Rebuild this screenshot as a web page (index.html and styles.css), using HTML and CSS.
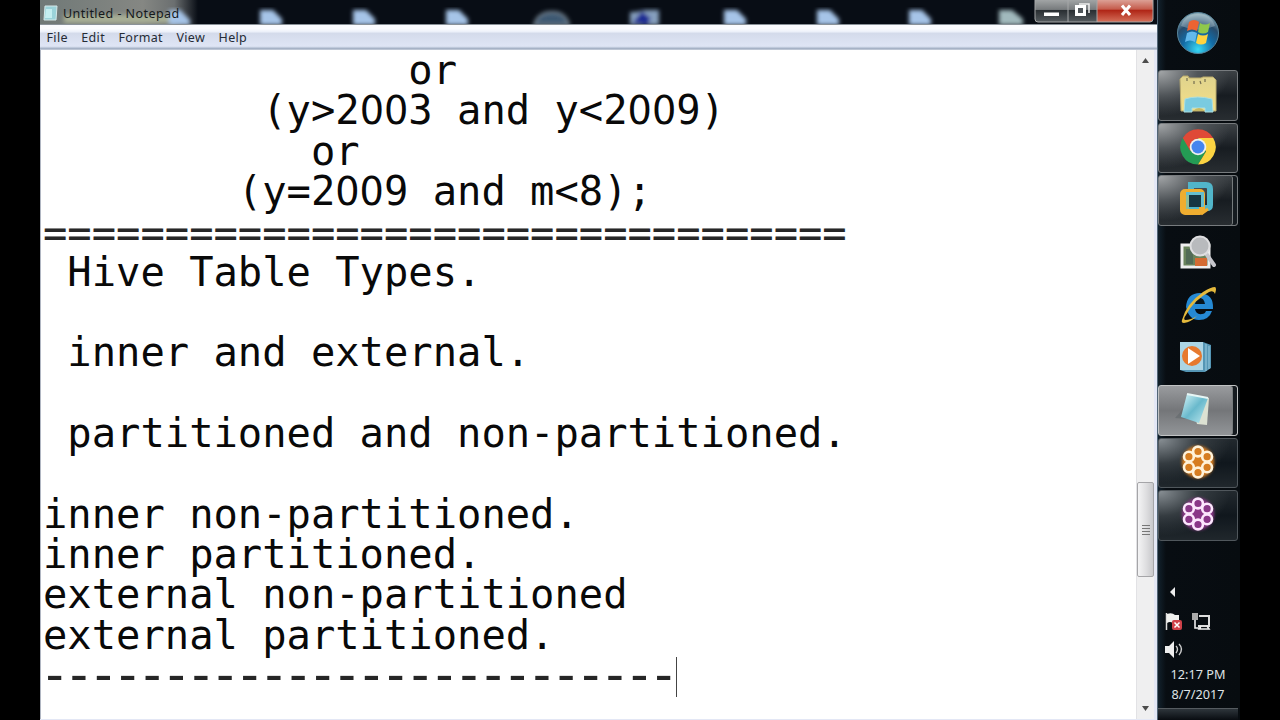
FILE: index.html
```html
<!DOCTYPE html>
<html lang="en">
<head>
<meta charset="utf-8">
<title>Untitled - Notepad</title>
<link rel="stylesheet" href="styles.css">
</head>
<body>
<main class="screen">
  <section class="notepad">
    <header class="titlebar">
      <svg class="desktop-strip" viewBox="0 0 1117 25" width="1117" height="25" aria-hidden="true">
        <defs>
          <filter id="soft" x="-20%" y="-20%" width="140%" height="140%"><feGaussianBlur stdDeviation="2"/></filter>
          <linearGradient id="glass" x1="0" x2="1"><stop offset="0" stop-color="#707977"/><stop offset=".65" stop-color="#858783"/><stop offset=".85" stop-color="#6b6f70"/><stop offset="1" stop-color="#080d15"/></linearGradient>
        </defs>
        <rect width="1117" height="25" fill="#080d15"/>
        <rect width="158" height="25" fill="url(#glass)"/>
        <g filter="url(#soft)">
          <rect x="24" y="15" width="105" height="8" fill="#a9b096"/>
          <g fill="#a6c4e8">
            <path d="M129 25V10h11l10 10v5z"/><path d="M220 25V10h13l9 9v6z"/><path d="M313 25V10h13l9 9v6z"/><path d="M406 25V10h13l9 9v6z"/>
            <path d="M590 25V12h5l10-2h14v15z" opacity=".8"/><path d="M684 25V10h13l9 9v6z"/><path d="M777 25V10h13l9 9v6z"/><path d="M869 25V10h13l9 9v6z"/><path d="M959 25V10h13l11 9v6z" fill="#a1b9bd"/>
          </g>
          <path d="M494 25q4-13 18-13t17 13z" fill="#3c5872" stroke="#7c8b97" stroke-width="2"/>
          <path d="M592 23l10-12 9 7-3 7z" fill="#1b2993"/>
        </g>
        <path d="M0 24.5h1117" stroke="#8a9299"/>
      </svg>
      <div class="caption">
        <svg class="app-icon" width="18" height="18" viewBox="0 0 18 18"><path d="M3 2h12l-1 14H2z" fill="#9bd3d9" stroke="#d5e8e8"/><path d="M4 5h6v9H3z" fill="#c4eef0"/></svg>
        <span>Untitled - Notepad</span>
      </div>
      <div class="window-buttons">
        <svg width="120" height="24" viewBox="0 0 120 24">
          <defs>
            <linearGradient id="gray" x2="0" y2="1"><stop stop-color="#a1a4a5"/><stop offset=".43" stop-color="#777b7d"/><stop offset=".47" stop-color="#292e32"/><stop offset="1" stop-color="#555b5f"/></linearGradient>
            <linearGradient id="red" x2="0" y2="1"><stop stop-color="#dca095"/><stop offset=".42" stop-color="#c55b4b"/><stop offset=".46" stop-color="#af2415"/><stop offset="1" stop-color="#d5705a"/></linearGradient>
          </defs>
          <path d="M1 0h62v22H4q-3 0-3-3z" fill="url(#gray)"/><path d="M63 0h56v19q0 3-3 3H63z" fill="url(#red)"/>
          <path d="M1 0v19q0 3 3 3h112q3 0 3-3V0M34 0v22M63 0v22" fill="none" stroke="#a5a7a8"/>
          <path d="M10 12.5h15v3.5H10z" fill="#fff"/>
          <path d="M45 4h10v9" fill="none" stroke="#eee" stroke-width="1.5"/><path d="M42.5 6.5h8v8h-8z" fill="#50565a" stroke="#fff" stroke-width="3"/>
          <path d="M88 5.5l8 9.5M96 5.5l-8 9.5" stroke="#fff" stroke-width="3"/>
        </svg>
      </div>
    </header>
    <nav class="menu"><span>File</span><span>Edit</span><span>Format</span><span>View</span><span>Help</span></nav>
    <div class="editor">
      <pre class="text">               or
         (y&gt;2<span class="zero">00</span>3 and y&lt;2<span class="zero">00</span>9)
           or
        (y=2<span class="zero">00</span>9 and m&lt;8);
<span class="rule">=================================</span>
 Hive Table Types.

 inner and external.

 partitioned and non-partitioned.

inner non-partitioned.
inner partitioned.
external non-partitioned
external partitioned.
<span class="dash">--------------------------</span><span class="caret"></span></pre>
      <div class="scrollbar">
        <span class="arrow up"></span>
        <div class="track"><div class="thumb"><i></i><i></i><i></i><i></i></div></div>
        <span class="arrow down"></span>
      </div>
    </div>
  </section>
  <aside class="taskbar">
    <div class="start">
      <svg width="44" height="44" viewBox="0 0 44 44">
        <defs><radialGradient id="orb" cx=".5" cy=".9" r=".85"><stop stop-color="#37d9f5"/><stop offset=".45" stop-color="#136ba5"/><stop offset=".75" stop-color="#274c6c"/><stop offset="1" stop-color="#8eacb7"/></radialGradient></defs>
        <circle cx="22" cy="22" r="20.5" fill="url(#orb)" stroke="#57849a"/>
        <path d="M5 15Q9 3 22 3t17 12q-17 7-34 0z" fill="#c4d8df" opacity=".35"/>
        <path d="M13 11q5-4 10 0l-2 9q-5-3-10 0z" fill="#ed6332"/><path d="M24 12q5 3 10 0l-2 9q-5 3-10 0z" fill="#8fc84b"/>
        <path d="M11 22q5-3 10 0l-2 9q-5-3-10 0z" fill="#63b9ec"/><path d="M22 23q5 3 10 0l-2 9q-5 3-10 0z" fill="#ffd33f"/>
      </svg>
    </div>
    <div class="task framed">
      <svg width="42" height="40" viewBox="0 0 42 40"><defs><linearGradient id="folder" x2="0" y2="1"><stop stop-color="#dfd38d"/><stop offset="1" stop-color="#f4df87"/></linearGradient></defs><path d="M3 5l3-3h5l1 2h12l2-1h10l3 3v31H4z" fill="url(#folder)" stroke="#b9aa6c"/><path d="M10 4v3M17 7v3M23 7l1 3M28 5v3" stroke="#756e50" stroke-width="1.2"/><path d="M7 38l1-13q12-4 27 0l1 13h-8v-4H15v4z" fill="#7acbe0" stroke="#acdfe0"/><path d="M16 37q6-6 12 0z" fill="#c6b865"/></svg>
    </div>
    <div class="task framed">
      <svg width="36" height="36" viewBox="0 0 36 36"><path d="M18 18L2.8 9A17.5 17.5 0 0 0 18 35.5l8-13z" fill="#249b54"/><path d="M18 9h15.2A17.5 17.5 0 0 1 18 35.5l8-13z" fill="#fbd342"/><path d="M2.8 9l7.5 13 7.7-13h15.2A17.5 17.5 0 0 0 2.8 9z" fill="#df4937"/><circle cx="18" cy="18" r="8.3" fill="#eef1ed"/><circle cx="18" cy="18" r="6.5" fill="#4585ee"/></svg>
    </div>
    <div class="task framed stacked">
      <svg class="vm" width="38" height="38" viewBox="0 0 38 38"><path d="M14 5h15q4 0 4 4v16q0 3-3 3H14z" fill="none" stroke="#51b5c9" stroke-width="6"/><rect x="6" y="12" width="19" height="20" rx="2" fill="none" stroke="#efad30" stroke-width="6"/><path d="M9 15v-3h18v15h-4V15z" fill="#65bdcf"/><path d="M9 15h3v14H9z" fill="#8ebd9a"/><path d="M12 15h12v12H12z" fill="#173542"/><path d="M24 34l7-5" stroke="#efad30" stroke-width="3"/></svg>
    </div>
    <div class="task">
      <svg width="40" height="38" viewBox="0 0 40 38"><path d="M4 12h27v22H4z" fill="#69835b" stroke="#eee" stroke-width="3"/><path d="M17 25h12v8H17z" fill="#d46b32"/><path d="M8 16h7v15H8z" fill="#526b56"/><path d="M27 19l9 13" stroke="#c6c6cc" stroke-width="4" stroke-linecap="round"/><circle cx="22" cy="13" r="9.5" fill="#b8babd" stroke="#dedee0" stroke-width="2"/></svg>
    </div>
    <div class="task">
      <svg width="40" height="40" viewBox="0 0 40 40"><path d="M34 27Q31 36 21 36T8 23Q9 9 22 9q14 1 13 16H17q1 6 7 5 3 0 4-3z" fill="#2589d4"/><path d="M17 20h10q-1-6-5-6-4 1-5 6z" fill="#07151f"/><path d="M4 36Q8 20 25 8q8-5 12-5 2 1 0 7-1-4-6-2Q16 16 8 31q-3 4-1 5 6 0 12-4-6 6-13 7-3 0-2-3z" fill="#e4b93c"/></svg>
    </div>
    <div class="task">
      <svg width="44" height="36" viewBox="0 0 44 36"><path d="M4 3h23v28H4z" fill="#acd5e5"/><path d="M27 3l8 3v23l-6 4H10l-6-2h23z" fill="#5596b5"/><path d="M30 5v27M33 7v23" stroke="#9ccce0"/><circle cx="16" cy="17" r="10" fill="#e7792e"/><path d="M12 9l12 8-12 8z" fill="#fff"/></svg>
    </div>
    <div class="task framed stacked active">
      <svg class="note-icon" width="42" height="38" viewBox="0 0 42 38"><defs><linearGradient id="note" x2="1" y2="1"><stop stop-color="#dcf8fa"/><stop offset=".5" stop-color="#69b9cc"/><stop offset="1" stop-color="#c1eaf0"/></linearGradient></defs><path d="M0 28Q10 18 15 5l15 2-6 23z" fill="#50595d" opacity=".35"/><path d="M15 5l19 3-2 27-10-1z" fill="#dce1d2"/><path d="M12 4l21 4-9 25-18-6z" fill="url(#note)"/><path d="M12 4l21 4" stroke="#e7f6f5" stroke-width="2"/></svg>
    </div>
    <div class="task framed flower orange">
      <svg width="38" height="38" viewBox="0 0 38 38"><circle class="glow" cx="19" cy="19" r="16"/><g fill="none" stroke="#fff2d9" stroke-width="2.6"><circle cx="19" cy="8.5" r="4.9"/><circle cx="28.1" cy="13.7" r="4.9"/><circle cx="28.1" cy="24.3" r="4.9"/><circle cx="19" cy="29.5" r="4.9"/><circle cx="9.9" cy="24.3" r="4.9"/><circle cx="9.9" cy="13.7" r="4.9"/></g></svg>
    </div>
    <div class="task framed flower purple">
      <svg width="38" height="38" viewBox="0 0 38 38"><circle class="glow" cx="19" cy="19" r="16"/><g fill="none" stroke="#fce6fd" stroke-width="2.6"><circle cx="19" cy="8.5" r="4.9"/><circle cx="28.1" cy="13.7" r="4.9"/><circle cx="28.1" cy="24.3" r="4.9"/><circle cx="19" cy="29.5" r="4.9"/><circle cx="9.9" cy="24.3" r="4.9"/><circle cx="9.9" cy="13.7" r="4.9"/></g></svg>
    </div>
    <div class="tray">
      <svg width="60" height="80" viewBox="0 0 60 80"><path d="M17 5v10l-5-5z" fill="#eee"/><path d="M8.5 31v17" stroke="#ddd" stroke-width="1.5"/><path d="M9 32q5-2 8 1h4v8h-6q-3-2-6 0z" fill="#f0f0ee"/><rect x="14" y="38" width="10" height="10" rx="2" fill="#cf4149"/><path d="M16.5 40.5l5 5m0-5l-5 5" stroke="#fff" stroke-width="1.5"/><path d="M41 34h10v10H40" fill="none" stroke="#ddd" stroke-width="2"/><path d="M34 31h6v7h-6z" fill="#aaa"/><path d="M37 38v8h6M43 44l-2 3h10l-2-3" stroke="#eee" stroke-width="1.6" fill="none"/><path d="M7 64h4l5-5v17l-5-5H7z" fill="#eee"/><path d="M18 64q3 3 0 7M21 62q5 5 0 11" fill="none" stroke="#ccc" stroke-width="1.4"/></svg>
      <div class="clock"><span>12:17 PM</span><span>8/7/2017</span></div>
    </div>
    <div class="show-desktop"></div>
  </aside>
</main>
</body>
</html>
```
FILE: styles.css
```css
* { box-sizing: border-box; }
body { margin: 0; background: #000; overflow: hidden; font-family: "Noto Sans", sans-serif; }
.screen { width: 1280px; height: 720px; padding: 0 40px; display: flex; }
.notepad { width: 1117px; height: 720px; display: flex; flex-direction: column; background: #e3e7f5; }
.titlebar { height: 25px; flex: none; position: relative; display: flex; justify-content: space-between; }
.desktop-strip { position: absolute; inset: 0; }
.caption { position: relative; display: flex; align-items: center; gap: 3px; padding-left: 1px; height: 26px; font-size: 12.5px; letter-spacing: .45px; color: #15191b; }
.app-icon { margin-left: 1px; }
.window-buttons { position: relative; width: 123px; }
.window-buttons svg { display: block; }
.menu { height: 25px; flex: none; display: flex; align-items: center; gap: 13.4px; padding: 0 6.5px; font-size: 12.5px; letter-spacing: .35px; color: #252b35; background: linear-gradient(#fbfcff 0 15%, #edf1fa 26%, #d4dbeb 34%, #dfe5f5 85%, #a6b2c6 94%, #c8cfdb); }
.editor { height: 669px; flex: none; display: flex; background: #fff; border-left: 1px solid #b0b6c2; margin-right: 3px; }
.text { margin: 0; padding-left: 2px; width: 1095px; font: 40.46px/40.33px "DejaVu Sans Mono", monospace; color: #090909; }
.zero { font-family: "DejaVu Sans", sans-serif; font-size: 38.28px; line-height: 0; }
.rule { position: relative; top: 2px; color: #262626; }
.dash { font-size: 52px; letter-spacing: -6.945px; line-height: 0; margin-left: -4px; position: relative; top: 3px; color: #262626; }
.caret { display: inline-block; width: 1px; height: 40px; margin: 0 0 -8px 4px; background: #444; }
.scrollbar { width: 18px; display: flex; flex-direction: column; align-items: center; background: #efeff0; border-left: 1px solid #e2e2e5; }
.arrow { width: 7px; height: 5px; margin: 8px 0; background: #4c4c4c; flex: none; clip-path: polygon(50% 0, 100% 100%, 0 100%); }
.down { transform: rotate(180deg); }
.track { flex: 1; width: 100%; padding-top: 411px; }
.thumb { height: 95px; border: 1px solid #a5a5a8; border-radius: 2px; background: linear-gradient(90deg, #f4f4f5, #dedee0 55%, #c8c8cb); display: flex; flex-direction: column; align-items: center; justify-content: center; gap: 2px; }
.thumb i { height: 1px; width: 8px; background: #777; }
.taskbar { width: 83px; height: 720px; border-left: 1px solid #526677; background: linear-gradient(90deg, #12212c, #080d12 8px, #070c10); display: flex; flex-direction: column; align-items: flex-start; }
.start { width: 80px; height: 69px; flex: none; display: flex; align-items: center; justify-content: center; padding-bottom: 4px; }
.task { width: 80px; height: 52.5px; flex: none; display: flex; align-items: center; justify-content: center; padding-bottom: 2px; }
.framed { height: 50.5px; margin: 1px 0; border: 1px solid #777b7e; border-radius: 3px; background: radial-gradient(ellipse at 0 0, #a4a7a9 0, #51565a 35%, transparent 65%), linear-gradient(#3c4145, #171c21 50%, #282d31); }
.stacked { padding-right: 5px; box-shadow: inset -4px 0 #151b20, inset -5px 0 #767b7d; }
.active { background: linear-gradient(#999b9e, #747679 50%, #929598); border-color: #c1c3c4; }
.flower { background: radial-gradient(ellipse at 0 0, #899095 0, #353c41 36%, transparent 65%), linear-gradient(#22292e, #10171d 50%, #20272c); border-color: #50575c; }
.glow { filter: blur(1.5px); }
.orange .glow { fill: #d77d20; }
.purple .glow { fill: #8a3788; }
.tray { width: 80px; margin-top: 40px; display: flex; flex-direction: column; }
.clock { display: flex; flex-direction: column; align-items: center; color: #dfe3e5; font-size: 12.7px; line-height: 20.5px; margin-top: 2px; }
.show-desktop { width: 80px; height: 12px; margin-top: auto; border-top: 1px solid #555b60; background: linear-gradient(#2e353b, #080c11); }
```
